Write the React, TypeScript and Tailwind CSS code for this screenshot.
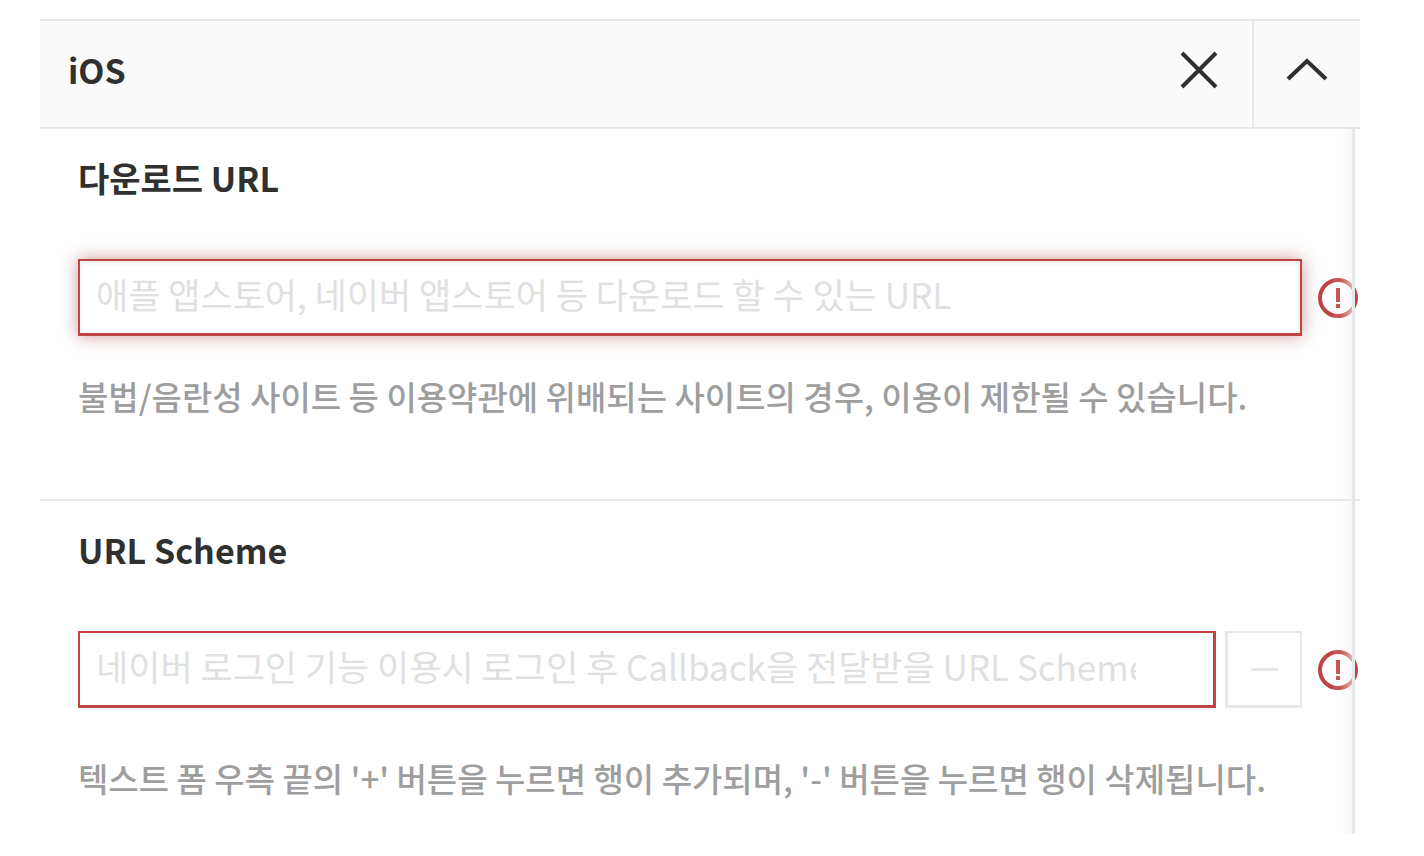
import type { ReactNode } from 'react';

function CloseIcon() {
  return (
    <svg width="40" height="40" viewBox="0 0 40 40" fill="none" stroke="#303030" strokeWidth="4" aria-hidden="true">
      <path d="M3 3L37 37M37 3L3 37" />
    </svg>
  );
}

function ArrowUpIcon() {
  return (
    <svg width="44" height="40" viewBox="0 0 44 40" fill="none" stroke="#303030" strokeWidth="4" aria-hidden="true">
      <path d="M3 29L22 11L41 29" />
    </svg>
  );
}

function ErrorIcon() {
  return (
    <svg className="shrink-0" width="40" height="40" viewBox="0 0 40 40" role="img" aria-label="오류">
      <circle cx="20" cy="20" r="18" fill="none" stroke="#be4541" strokeWidth="4" />
      <path d="M18 10h4v14h-4zM18 26h4v4h-4z" fill="#be4541" />
    </svg>
  );
}

type FieldProps = {
  id: string;
  label: string;
  children: ReactNode;
};

function Field({ id, label, children }: FieldProps) {
  return (
    <div className="pl-[38px] pr-[2px] pt-[25px]">
      <label htmlFor={id} className="block text-[34px] leading-[48px] font-bold text-[#303030]">
        {label}
      </label>
      {children}
    </div>
  );
}

function App() {
  return (
    <main className="min-h-screen bg-white py-[19px] pr-16 pl-10 font-['Noto_Sans_CJK_KR',sans-serif]">
      <section>
        {/* Panel header */}
        <header className="flex h-[110px] items-stretch border-y-2 border-[#e7e7e7] bg-[#fafafa]">
          <h2 className="flex flex-1 items-center pb-2 pl-7 text-[34px] leading-[48px] font-bold text-[#303030]">iOS</h2>
          <button type="button" aria-label="삭제" className="flex w-[107px] items-center justify-center pb-2">
            <CloseIcon />
          </button>
          <button
            type="button"
            aria-label="접기"
            className="flex w-[108px] items-center justify-center border-l-2 border-[#e7e7e7] pb-2"
          >
            <ArrowUpIcon />
          </button>
        </header>

        <div className="relative">
          {/* Download URL */}
          <div className="border-b-2 border-[#e7e7e7] pb-[79px]">
            <Field id="download-url" label="다운로드 URL">
              <div className="mt-[57px] flex items-center gap-4">
                <input
                  id="download-url"
                  type="text"
                  placeholder="애플 앱스토어, 네이버 앱스토어 등 다운로드 할 수 있는 URL"
                  className="h-[77px] min-w-0 flex-1 border-2 border-b-3 border-[#be4541] bg-white pr-[77px] pb-2 pl-4 text-[35px] shadow-[0_0_16px_rgba(160,50,50,0.5),inset_0_2px_4px_rgba(0,0,0,0.08)] outline-none placeholder:text-[#e0e0e0]"
                />
                <ErrorIcon />
              </div>
              <p className="mt-9 text-[33px] leading-[48px] font-medium text-[#9e9e9e]">
                불법/음란성 사이트 등 이용약관에 위배되는 사이트의 경우, 이용이 제한될 수 있습니다.
              </p>
            </Field>
          </div>

          {/* URL Scheme */}
          <div className="pb-8">
            <Field id="url-scheme" label="URL Scheme">
              <div className="mt-[57px] flex items-center gap-4">
                <div className="flex min-w-0 flex-1 gap-[9px]">
                  <input
                    id="url-scheme"
                    type="text"
                    placeholder="네이버 로그인 기능 이용시 로그인 후 Callback을 전달받을 URL Scheme"
                    className="h-[77px] min-w-0 flex-1 border-2 border-r-3 border-b-3 border-[#be4541] bg-white pr-[77px] pb-2 pl-4 text-[35px] outline-none placeholder:text-[#e0e0e0]"
                  />
                  <button
                    type="button"
                    aria-label="행 삭제"
                    className="flex size-[77px] items-center justify-center border-2 border-b-3 border-l-3 border-[#e6e7e9] bg-white"
                  >
                    <span className="h-[3px] w-[27px] bg-[#e6e7e9]" />
                  </button>
                </div>
                <ErrorIcon />
              </div>
              <p className="mt-[46px] text-[33px] leading-[48px] font-medium text-[#9e9e9e]">
                텍스트 폼 우측 끝의 '+' 버튼을 누르면 행이 추가되며, '-' 버튼을 누르면 행이 삭제됩니다.
              </p>
            </Field>
          </div>

          {/* Scroll edge */}
          <div className="pointer-events-none absolute inset-y-0 right-[5px] w-[22px] border-r-3 border-[#e6e7e9] bg-linear-to-r from-[#fafafa]/10 from-40% to-[#f3f3f3]/60" />
        </div>
      </section>
    </main>
  );
}

export default App;
